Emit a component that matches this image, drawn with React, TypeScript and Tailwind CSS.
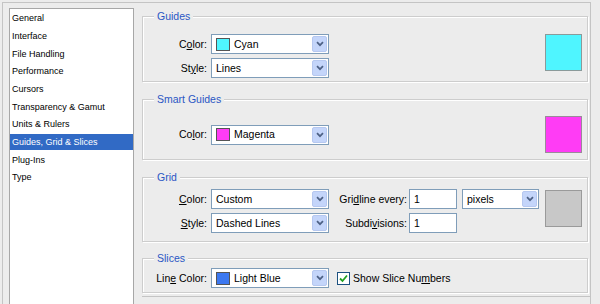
const items = [
  "General",
  "Interface",
  "File Handling",
  "Performance",
  "Cursors",
  "Transparency & Gamut",
  "Units & Rulers",
  "Guides, Grid & Slices",
  "Plug-Ins",
  "Type",
];

const font = "font-['Liberation_Sans',Arial,sans-serif]";

function Chevron() {
  return (
    <svg width="8" height="6" viewBox="0 0 8 6">
      <path d="M1 1.2 L4 4.2 L7 1.2" fill="none" stroke="#4d6185" strokeWidth="1.7" />
    </svg>
  );
}

function Select({ value, swatch, width }: { value: string; swatch?: string; width: string }) {
  return (
    <div className={`flex h-[20px] items-center border border-[#7f9db9] bg-white ${width}`}>
      <div className="flex flex-1 items-center gap-[4px] pl-[4px]">
        {swatch && <span className={`h-[13px] w-[14px] border border-[#555] ${swatch}`} />}
        <span className="text-[10.5px] leading-none text-black">{value}</span>
      </div>
      <div className="mr-[1px] flex h-[16px] w-[15px] items-center justify-center rounded-[2px] border border-[#b6c8f0] bg-[#c4d5fa]">
        <Chevron />
      </div>
    </div>
  );
}

function TextBox({ value }: { value: string }) {
  return (
    <div className="flex h-[20px] w-[48px] items-center border border-[#7f9db9] bg-white pl-[4px] text-[10.5px] leading-none">
      {value}
    </div>
  );
}

function Label({ children, width }: { children: React.ReactNode; width: string }) {
  return <div className={`text-right text-[10.5px] leading-none text-black ${width}`}>{children}</div>;
}

function Group({ title, height, children }: { title: string; height: string; children: React.ReactNode }) {
  return (
    <fieldset className={`w-[446px] border border-[#cdcdcd] shadow-[inset_1px_1px_0_#fff,1px_1px_0_#fff] ${height}`}>
      <legend className="ml-[11px] bg-[#ececec] px-[3px] text-[10.5px] leading-[14px] text-[#2a56c4]">{title}</legend>
      {children}
    </fieldset>
  );
}

export default function App() {
  return (
    <div className={`h-[304px] w-[600px] overflow-hidden bg-[#ececec] pl-[2px] pt-[2px] ${font}`}>
      <div className="flex h-[310px] w-[589px] items-start border-l border-r border-t border-[#c4c4c4] pl-[6px] pt-[5px]">
        {/* category list */}
        <div className="h-[310px] w-[125px] border border-[#a7a7a7] bg-white pt-px">
          {items.map((it) => (
            <div key={it} className="flex h-[17.67px] items-center">
              <div
                className={`flex h-[16px] w-full items-center pl-[2px] text-[9px] leading-none ${
                  it === "Guides, Grid & Slices" ? "bg-[#316ac5] text-white" : "text-black"
                }`}
              >
                {it}
              </div>
            </div>
          ))}
        </div>

        <div className="ml-[8px] mt-px flex flex-col">
          <Group title="Guides" height="h-[73px]">
            <div className="flex pr-[5px] pt-[11px]">
              <div className="flex flex-col gap-[4px]">
                <div className="flex items-center gap-[4px]">
                  <Label width="w-[64px]">
                    C<span className="underline">o</span>lor:
                  </Label>
                  <Select value="Cyan" swatch="bg-[#4ff5ff]" width="w-[118px]" />
                </div>
                <div className="flex items-center gap-[4px]">
                  <Label width="w-[64px]">
                    St<span className="underline">y</span>le:
                  </Label>
                  <Select value="Lines" width="w-[118px]" />
                </div>
              </div>
              <div className="ml-auto h-[37px] w-[37px] border border-[#8a9a9a] bg-[#4ff5ff]" />
            </div>
          </Group>

          <div className="mt-[10px]">
            <Group title="Smart Guides" height="h-[68px]">
              <div className="flex pr-[5px] pt-[10px]">
                <div className="flex items-center gap-[4px]">
                  <Label width="w-[64px]">
                    Co<span className="underline">l</span>or:
                  </Label>
                  <Select value="Magenta" swatch="bg-[#ff3cf5]" width="w-[118px]" />
                </div>
                <div className="ml-auto h-[37px] w-[37px] border border-[#9a8a9a] bg-[#ff3cf5]" />
              </div>
            </Group>
          </div>

          <div className="mt-[10px]">
            <Group title="Grid" height="h-[72px]">
              <div className="flex pr-[5px] pt-[5px]">
                <div className="flex flex-col gap-[4px]">
                  <div className="flex items-center gap-[4px]">
                    <Label width="w-[64px]">
                      <span className="underline">C</span>olor:
                    </Label>
                    <Select value="Custom" width="w-[118px]" />
                    <Label width="w-[74px]">
                      Gri<span className="underline">d</span>line every:
                    </Label>
                    <div className="-ml-[2px]">
                      <TextBox value="1" />
                    </div>
                    <div className="ml-px">
                      <Select value="pixels" width="w-[77px]" />
                    </div>
                  </div>
                  <div className="flex items-center gap-[4px]">
                    <Label width="w-[64px]">
                      <span className="underline">S</span>tyle:
                    </Label>
                    <Select value="Dashed Lines" width="w-[118px]" />
                    <Label width="w-[74px]">
                      Subdi<span className="underline">v</span>isions:
                    </Label>
                    <div className="-ml-[2px]">
                      <TextBox value="1" />
                    </div>
                  </div>
                </div>
                <div className="ml-auto mt-px h-[37px] w-[37px] border border-[#9a9a9a] bg-[#c8c8c8]" />
              </div>
            </Group>
          </div>

          <div className="mt-[9px]">
            <Group title="Slices" height="h-[42px]">
              <div className="flex items-center gap-[4px] pt-[3px]">
                <Label width="w-[64px]">
                  Lin<span className="underline">e</span> Color:
                </Label>
                <Select value="Light Blue" swatch="bg-[#3c78f0]" width="w-[118px]" />
                <div className="ml-[4px] flex items-center gap-[3px]">
                  <div className="flex h-[13px] w-[13px] items-center justify-center border border-[#1c5180] bg-white">
                    <svg width="9" height="9" viewBox="0 0 9 9">
                      <path d="M1 4.5 L3.5 7 L8 1.5" fill="none" stroke="#21a121" strokeWidth="1.8" />
                    </svg>
                  </div>
                  <span className="text-[10.5px] leading-none text-black">
                    Show Slice Nu<span className="underline">m</span>bers
                  </span>
                </div>
              </div>
            </Group>
          </div>

          <div className="mt-[3px] h-px w-[448px] bg-[#c4c4c4]" />
        </div>
      </div>
    </div>
  );
}
